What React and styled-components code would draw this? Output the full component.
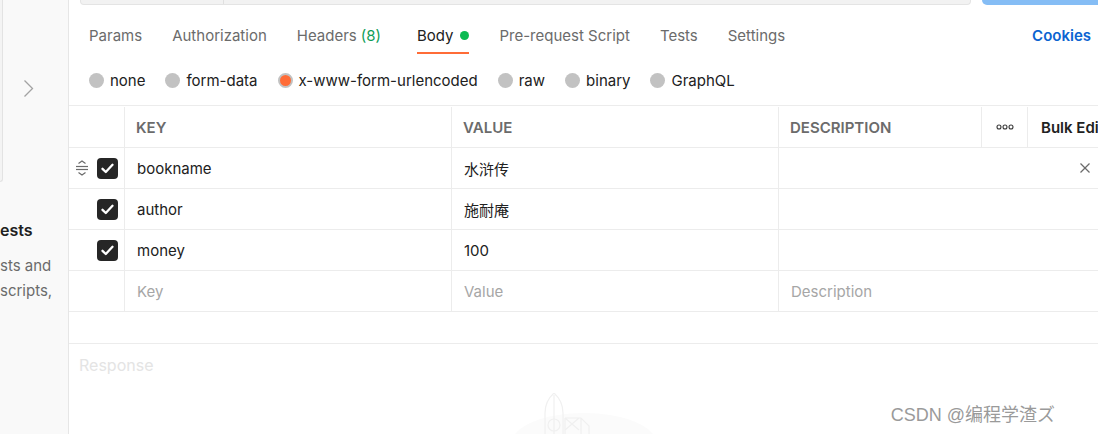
import React from "react";
import styled, { createGlobalStyle } from "styled-components";

const Global = createGlobalStyle`
  html, body { margin: 0; padding: 0; background: #ffffff; overflow: hidden; }
  body { font-family: Inter, "Noto Sans CJK SC", "Noto Sans", sans-serif; -webkit-font-smoothing: antialiased; }
  * { box-sizing: border-box; }
`;

const Page = styled.div`
  position: relative;
  display: flex;
  width: 1098px;
  height: 434px;
  overflow: hidden;
  background: #fff;
`;

const Sidebar = styled.aside`
  flex: 0 0 69px;
  height: 100%;
  background: #f9f9f9;
  border-right: 1px solid #e6e6e6;
  display: flex;
  flex-direction: column;
  overflow: hidden;
`;

const SideTop = styled.div`
  flex-shrink: 0;
  height: 182px;
  display: flex;
  align-items: center;
`;

const SideCard = styled.div`
  align-self: stretch;
  width: 3px;
  background: #f4f4f4;
  border-right: 1px solid #e3e3e3;
  border-bottom: 1px solid #e3e3e3;
  border-bottom-right-radius: 4px;
`;

const ChevronWrap = styled.div`
  margin-left: 20px;
  margin-top: -6px;
  display: flex;
`;

const SideHeading = styled.div`
  flex-shrink: 0;
  margin-top: 38px;
  font-size: 16px;
  line-height: 20px;
  font-weight: 600;
  color: #212121;
  white-space: nowrap;
`;

const SideText = styled.div`
  flex-shrink: 0;
  margin-top: 13px;
  font-size: 15px;
  line-height: 25px;
  color: #6b6b6b;
  white-space: nowrap;
`;

const Main = styled.main`
  flex: 1;
  min-width: 0;
  display: flex;
  flex-direction: column;
  & > * { flex-shrink: 0; }
`;

const TopRow = styled.div`
  height: 5px;
  display: flex;
  padding-left: 11px;
  gap: 11px;
`;

const UrlBox = styled.div`
  width: 891px;
  height: 5px;
  display: flex;
  background: #f2f2f2;
  border: 1px solid #e4e4e4;
  border-top: none;
  border-radius: 0 0 4px 4px;
`;

const UrlMethod = styled.div`
  width: 143px;
  border-right: 1px solid #e0e0e0;
`;

const SendButton = styled.div`
  flex: 1;
  height: 5px;
  background: #85bdf5;
  border-bottom-left-radius: 5px;
`;

const TabBar = styled.nav`
  height: 50px;
  display: flex;
  align-items: flex-start;
  padding-left: 20px;
  padding-right: 7px;
  gap: 30px;
`;

const Tab = styled.div`
  height: 49px;
  padding-top: 13px;
  padding-right: ${(p) => (p.$extra ? 6 : 0)}px;
  display: flex;
  align-items: center;
  gap: 7px;
  font-size: 15px;
  color: ${(p) => (p.$active ? "#212121" : "#6b6b6b")};
  border-bottom: 2px solid ${(p) => (p.$active ? "#ff6c37" : "transparent")};
  white-space: nowrap;
`;

const Count = styled.span`
  color: #0f9d58;
  margin-left: 4px;
`;

const Dot = styled.span`
  width: 9px;
  height: 9px;
  border-radius: 50%;
  background: #0cbb52;
`;

const Cookies = styled(Tab)`
  margin-left: auto;
  color: #0b64d1;
  font-weight: 600;
`;

const RadioRow = styled.div`
  height: 50px;
  display: flex;
  align-items: center;
  padding-left: 20px;
  gap: 20px;
`;

const RadioItem = styled.label`
  display: flex;
  align-items: center;
  gap: 6px;
  font-size: 15px;
  color: #212121;
  white-space: nowrap;
`;

const RadioCircle = styled.span`
  width: 15px;
  height: 15px;
  border-radius: 50%;
  background: ${(p) => (p.$checked ? "#ff6c37" : "#c2c2c2")};
  border: ${(p) => (p.$checked ? "2px solid #c2c2c2" : "none")};
`;

const Table = styled.div`
  border-top: 1px solid #ececec;
  display: flex;
  flex-direction: column;
`;

const HeaderRow = styled.div`
  display: grid;
  grid-template-columns: 56px 327px 327px 203px 46px 70px;
  height: 42px;
  border-bottom: 1px solid #ececec;
`;

const HeadCell = styled.div`
  display: flex;
  align-items: center;
  justify-content: ${(p) => (p.$center ? "center" : "flex-start")};
  padding-left: ${(p) => (p.$center ? 0 : p.$pad || 11)}px;
  font-size: 15px;
  font-weight: 600;
  color: ${(p) => (p.$dark ? "#212121" : "#6b6b6b")};
  border-right: ${(p) => (p.$last ? "none" : "1px solid #ececec")};
  white-space: nowrap;
  overflow: hidden;
  margin-top: 1px;
`;

const Row = styled.div`
  display: grid;
  grid-template-columns: 56px 327px 327px 1fr;
  height: 41px;
  border-bottom: 1px solid #ececec;
`;

const SelectCell = styled.div`
  display: flex;
  align-items: center;
  padding-left: 6px;
  gap: 8px;
  border-right: 1px solid #ececec;
`;

const DragHandle = styled.span`
  display: flex;
  visibility: ${(p) => (p.$show ? "visible" : "hidden")};
`;

const Check = styled.span`
  width: 21px;
  height: 21px;
  border-radius: 4px;
  background: #262626;
  display: flex;
  align-items: center;
  justify-content: center;
`;

const Cell = styled.div`
  display: flex;
  align-items: center;
  justify-content: space-between;
  padding-left: 12px;
  padding-right: 8px;
  font-size: 15px;
  color: ${(p) => (p.$placeholder ? "#a6a6a6" : "#212121")};
  border-right: ${(p) => (p.$last ? "none" : "1px solid #ececec")};
  white-space: nowrap;
`;

const Spacer = styled.div`
  height: 31px;
`;

const Response = styled.section`
  flex: 1 1 auto !important;
  min-height: 0;
  overflow: hidden;
  border-top: 1px solid #ececec;
  padding-left: 10px;
  display: flex;
  flex-direction: column;
`;

const ResponseTitle = styled.div`
  flex-shrink: 0;
  margin-top: 11px;
  font-size: 16px;
  line-height: 20px;
  color: #e4e4e4;
`;

const Illustration = styled.div`
  flex-shrink: 0;
  margin-top: 18px;
  display: flex;
  justify-content: center;
  padding-right: 10px;
`;

const Watermark = styled.div`
  position: absolute;
  right: 43px;
  bottom: 8px;
  font-family: "Liberation Sans", "Noto Sans CJK SC", sans-serif;
  font-size: 18px;
  color: #9a9a9a;
  text-shadow: 0 0 1px #fff, 0 0 2px #fff;
  white-space: nowrap;
`;

const Chevron = () => (
  <svg width="11" height="19" viewBox="0 0 11 19">
    <polyline points="1.5,1.5 9.5,9.5 1.5,17.5" fill="none" stroke="#a3a3a3" strokeWidth="1.3" />
  </svg>
);

const DragIcon = () => (
  <svg width="14" height="18" viewBox="0 0 14 18">
    <g fill="none" stroke="#6b6b6b" strokeWidth="1.2">
      <polyline points="3.5,4.5 7,2 10.5,4.5" />
      <line x1="1" y1="7.5" x2="13" y2="7.5" />
      <line x1="1" y1="10.5" x2="13" y2="10.5" />
      <polyline points="3.5,13.5 7,16 10.5,13.5" />
    </g>
  </svg>
);

const CheckMark = () => (
  <svg width="13" height="11" viewBox="0 0 13 11">
    <polyline points="1.5,5.8 4.8,9 11.5,1.8" fill="none" stroke="#fff" strokeWidth="2.3" strokeLinecap="round" strokeLinejoin="round" />
  </svg>
);

const CloseIcon = () => (
  <svg width="10" height="10" viewBox="0 0 10 10">
    <g stroke="#6b6b6b" strokeWidth="1.2">
      <line x1="0.5" y1="0.5" x2="9.5" y2="9.5" />
      <line x1="9.5" y1="0.5" x2="0.5" y2="9.5" />
    </g>
  </svg>
);

const MoreIcon = () => (
  <svg width="18" height="6" viewBox="0 0 18 6">
    <g fill="none" stroke="#3a3a3a" strokeWidth="1.1">
      <circle cx="3" cy="3" r="2" />
      <circle cx="9" cy="3" r="2" />
      <circle cx="15" cy="3" r="2" />
    </g>
  </svg>
);

const Rocket = () => (
  <svg width="150" height="44" viewBox="0 0 150 44">
    <ellipse cx="75" cy="50" rx="72" ry="30" fill="#fbfbfb" />
    <g fill="none" stroke="#f0f0f0" strokeWidth="1.2">
      <path d="M36 44 L36 20 Q36 8 45 0 Q54 8 54 20 L54 44" />
      <line x1="45" y1="2" x2="45" y2="44" />
      <circle cx="45" cy="32" r="6" />
      <path d="M56 25 L72 25 L80 33 L80 44 M56 25 L56 44 M56 25 L70 37 M70 25 L56 37 M72 25 L72 44" />
    </g>
  </svg>
);

const tabs = ["Params", "Authorization", "Headers", "Body", "Pre-request Script", "Tests", "Settings"];
const bodyTypes = ["none", "form-data", "x-www-form-urlencoded", "raw", "binary", "GraphQL"];
const rows = [
  { key: "bookname", value: "水浒传", drag: true },
  { key: "author", value: "施耐庵" },
  { key: "money", value: "100" },
];

export default function App() {
  return (
    <Page>
      <Global />
      <Sidebar>
        <SideTop>
          <SideCard />
          <ChevronWrap>
            <Chevron />
          </ChevronWrap>
        </SideTop>
        <SideHeading>ests</SideHeading>
        <SideText>
          sts and
          <br />
          scripts,
        </SideText>
      </Sidebar>
      <Main>
        <TopRow>
          <UrlBox>
            <UrlMethod />
          </UrlBox>
          <SendButton />
        </TopRow>
        <TabBar>
          {tabs.map((t) => (
            <Tab key={t} $active={t === "Body"} $extra={t === "Headers"}>
              {t === "Headers" ? (
                <span>
                  Headers<Count>(8)</Count>
                </span>
              ) : (
                <span>{t}</span>
              )}
              {t === "Body" && <Dot />}
            </Tab>
          ))}
          <Cookies>Cookies</Cookies>
        </TabBar>
        <RadioRow>
          {bodyTypes.map((b) => (
            <RadioItem key={b}>
              <RadioCircle $checked={b === "x-www-form-urlencoded"} />
              {b}
            </RadioItem>
          ))}
        </RadioRow>
        <Table>
          <HeaderRow>
            <HeadCell />
            <HeadCell>KEY</HeadCell>
            <HeadCell>VALUE</HeadCell>
            <HeadCell>DESCRIPTION</HeadCell>
            <HeadCell $center>
              <MoreIcon />
            </HeadCell>
            <HeadCell $dark $last $pad={13}>
              Bulk Edit
            </HeadCell>
          </HeaderRow>
          {rows.map((r) => (
            <Row key={r.key}>
              <SelectCell>
                <DragHandle $show={r.drag}>
                  <DragIcon />
                </DragHandle>
                <Check>
                  <CheckMark />
                </Check>
              </SelectCell>
              <Cell>{r.key}</Cell>
              <Cell>{r.value}</Cell>
              <Cell $last>
                <span />
                {r.drag && <CloseIcon />}
              </Cell>
            </Row>
          ))}
          <Row>
            <SelectCell />
            <Cell $placeholder>Key</Cell>
            <Cell $placeholder>Value</Cell>
            <Cell $placeholder $last>
              Description
            </Cell>
          </Row>
        </Table>
        <Spacer />
        <Response>
          <ResponseTitle>Response</ResponseTitle>
          <Illustration>
            <Rocket />
          </Illustration>
        </Response>
      </Main>
      <Watermark>CSDN @编程学渣ズ</Watermark>
    </Page>
  );
}
